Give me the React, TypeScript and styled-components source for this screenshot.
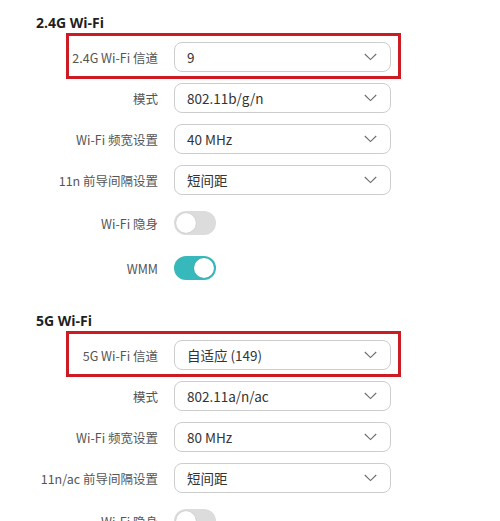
import React from "react";
import styled, { createGlobalStyle } from "styled-components";

const GlobalStyle = createGlobalStyle`
  html, body {
    margin: 0;
    padding: 0;
    background: #ffffff;
    font-family: "Noto Sans CJK SC", "Open Sans", sans-serif;
  }
`;

const Page = styled.div`
  width: 500px;
  height: 521px;
  overflow: hidden;
  background: #ffffff;
  padding: 13px 0 0 36px;
  box-sizing: border-box;
`;

const Section = styled.section<{ $gapTop?: number }>`
  display: flex;
  flex-direction: column;
  align-items: flex-start;
  margin-top: ${(p) => p.$gapTop ?? 0}px;
`;

const SectionTitle = styled.h2`
  margin: 0 0 9px 0;
  font-size: 14px;
  line-height: 20px;
  font-weight: 700;
  color: #1f1f1f;
  font-family: "Open Sans", "Noto Sans CJK SC", sans-serif;
`;

const Rows = styled.div`
  display: flex;
  flex-direction: column;
  align-items: flex-start;
  gap: 11px;
`;

const Row = styled.div<{ $highlight?: boolean; $tall?: boolean }>`
  position: relative;
  display: grid;
  grid-template-columns: 122px 217px;
  column-gap: 16px;
  align-items: center;
  height: ${(p) => (p.$tall ? 34 : 30)}px;

  ${(p) =>
    p.$highlight &&
    `
    &::after {
      content: "";
      position: absolute;
      top: -9px;
      bottom: -7px;
      left: 30px;
      right: -10px;
      border: 3px solid #cc1b22;
      pointer-events: none;
    }
  `}
`;

const Label = styled.label`
  text-align: right;
  font-size: 12.5px;
  color: #555555;
  white-space: nowrap;
  font-family: "Noto Sans CJK SC", "Open Sans", sans-serif;
`;

const Select = styled.div`
  box-sizing: border-box;
  height: 30px;
  border: 1px solid #cdcdcd;
  border-radius: 8px;
  display: flex;
  align-items: center;
  justify-content: space-between;
  padding: 0 13px 0 12px;
  font-size: 13.5px;
  color: #333333;
  background: #ffffff;
  font-family: "Noto Sans CJK SC", "Open Sans", sans-serif;
`;

const Chevron = () => (
  <svg width="13" height="8" viewBox="0 0 13 8" aria-hidden="true">
    <polyline
      points="0.8,1 6.5,6.6 12.2,1"
      fill="none"
      stroke="#6a6a6a"
      strokeWidth="1.1"
    />
  </svg>
);

const Toggle = styled.div<{ $on?: boolean }>`
  position: relative;
  width: 42px;
  height: 24px;
  border-radius: 12px;
  background: ${(p) => (p.$on ? "#37b9bc" : "#dcdcdc")};

  &::after {
    content: "";
    position: absolute;
    top: 2px;
    left: ${(p) => (p.$on ? "20px" : "2px")};
    width: 20px;
    height: 20px;
    border-radius: 50%;
    background: #ffffff;
    box-shadow: 0 0 1px rgba(0, 0, 0, 0.25);
  }
`;

type Item =
  | { kind: "select"; label: string; value: string; highlight?: boolean }
  | { kind: "toggle"; label: string; on: boolean };

const sections: { title: string; items: Item[] }[] = [
  {
    title: "2.4G Wi-Fi",
    items: [
      { kind: "select", label: "2.4G Wi-Fi 信道", value: "9", highlight: true },
      { kind: "select", label: "模式", value: "802.11b/g/n" },
      { kind: "select", label: "Wi-Fi 频宽设置", value: "40 MHz" },
      { kind: "select", label: "11n 前导间隔设置", value: "短间距" },
      { kind: "toggle", label: "Wi-Fi 隐身", on: false },
      { kind: "toggle", label: "WMM", on: true },
    ],
  },
  {
    title: "5G Wi-Fi",
    items: [
      { kind: "select", label: "5G Wi-Fi 信道", value: "自适应 (149)", highlight: true },
      { kind: "select", label: "模式", value: "802.11a/n/ac" },
      { kind: "select", label: "Wi-Fi 频宽设置", value: "80 MHz" },
      { kind: "select", label: "11n/ac 前导间隔设置", value: "短间距" },
      { kind: "toggle", label: "Wi-Fi 隐身", on: false },
    ],
  },
];

export default function App() {
  return (
    <>
      <GlobalStyle />
      <Page>
        {sections.map((s, i) => (
          <Section key={s.title} $gapTop={i === 0 ? 0 : 26}>
            <SectionTitle>{s.title}</SectionTitle>
            <Rows>
              {s.items.map((it, j) =>
                it.kind === "select" ? (
                  <Row key={j} $highlight={it.highlight}>
                    <Label>{it.label}</Label>
                    <Select>
                      <span>{it.value}</span>
                      <Chevron />
                    </Select>
                  </Row>
                ) : (
                  <Row key={j} $tall>
                    <Label>{it.label}</Label>
                    <Toggle $on={it.on} />
                  </Row>
                )
              )}
            </Rows>
          </Section>
        ))}
      </Page>
    </>
  );
}
